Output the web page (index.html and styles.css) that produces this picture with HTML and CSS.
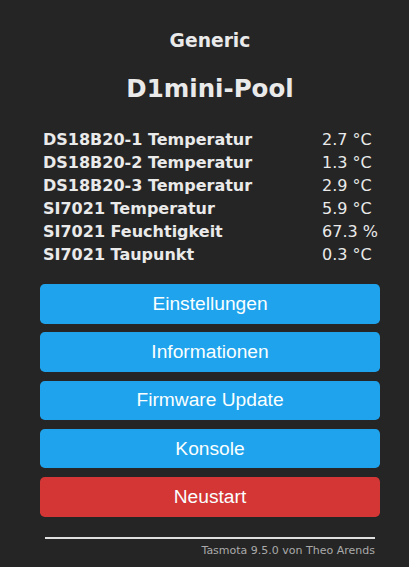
FILE: index.html
```html
<!DOCTYPE html>
<html lang="de">
<head>
<meta charset="utf-8">
<link rel="stylesheet" href="styles.css">
</head>
<body>
<div class="page">
  <header class="head">
    <h3 class="module">Generic</h3>
    <h2 class="device">D1mini-Pool</h2>
  </header>
  <table class="sensors">
    <tr><th>DS18B20-1 Temperatur</th><td>2.7 °C</td></tr>
    <tr><th>DS18B20-2 Temperatur</th><td>1.3 °C</td></tr>
    <tr><th>DS18B20-3 Temperatur</th><td>2.9 °C</td></tr>
    <tr><th>SI7021 Temperatur</th><td>5.9 °C</td></tr>
    <tr><th>SI7021 Feuchtigkeit</th><td>67.3 %</td></tr>
    <tr><th>SI7021 Taupunkt</th><td>0.3 °C</td></tr>
  </table>
  <nav class="menu">
    <button class="btn">Einstellungen</button>
    <button class="btn">Informationen</button>
    <button class="btn">Firmware Update</button>
    <button class="btn">Konsole</button>
    <button class="btn btn-danger">Neustart</button>
  </nav>
  <footer class="foot">
    <hr class="rule">
    <a class="credit" href="#">Tasmota 9.5.0 von Theo Arends</a>
  </footer>
</div>
</body>
</html>
```

FILE: styles.css
```css
html, body {
  margin: 0;
  padding: 0;
  background: #252525;
  color: #eaeaea;
  font-family: "DejaVu Sans", Verdana, sans-serif;
}
.page {
  width: 340px;
  margin-left: 40px;
  padding-top: 23px;
}
.head {
  text-align: center;
}
.module {
  margin: 0;
  font-size: 18.72px;
  line-height: 36px;
  font-weight: bold;
}
.device {
  margin: 0;
  font-size: 24.5px;
  line-height: 28px;
  font-weight: bold;
  margin-top: 16px;
}
.sensors {
  width: 100%;
  margin-top: 24px;
  border-spacing: 2px;
  font-size: 16px;
}
.sensors th {
  text-align: left;
  padding: 1px;
  line-height: 19px;
  font-weight: bold;
}
.sensors td {
  width: 20px;
  white-space: nowrap;
  padding: 1px 0 1px 1px;
  line-height: 19px;
}
.menu {
  display: flex;
  flex-direction: column;
  gap: 8.8px;
  margin-top: 17px;
}
.btn {
  display: block;
  width: 100%;
  height: 39.5px;
  border: 0;
  border-radius: 4.8px;
  background: #1fa3ec;
  color: #faffff;
  font-family: "Liberation Sans", Arial, sans-serif;
  font-size: 19.2px;
  padding: 0;
}
.btn-danger {
  background: #d43535;
}
.foot {
  text-align: right;
  font-size: 11px;
  padding: 0 5px;
  margin-top: 20px;
}
.rule {
  margin: 0;
  border: 0;
  border-top: 2px solid #e0e0e0;
}
.credit {
  display: block;
  color: #aaa;
  text-decoration: none;
  margin-top: 5px;
}
```
